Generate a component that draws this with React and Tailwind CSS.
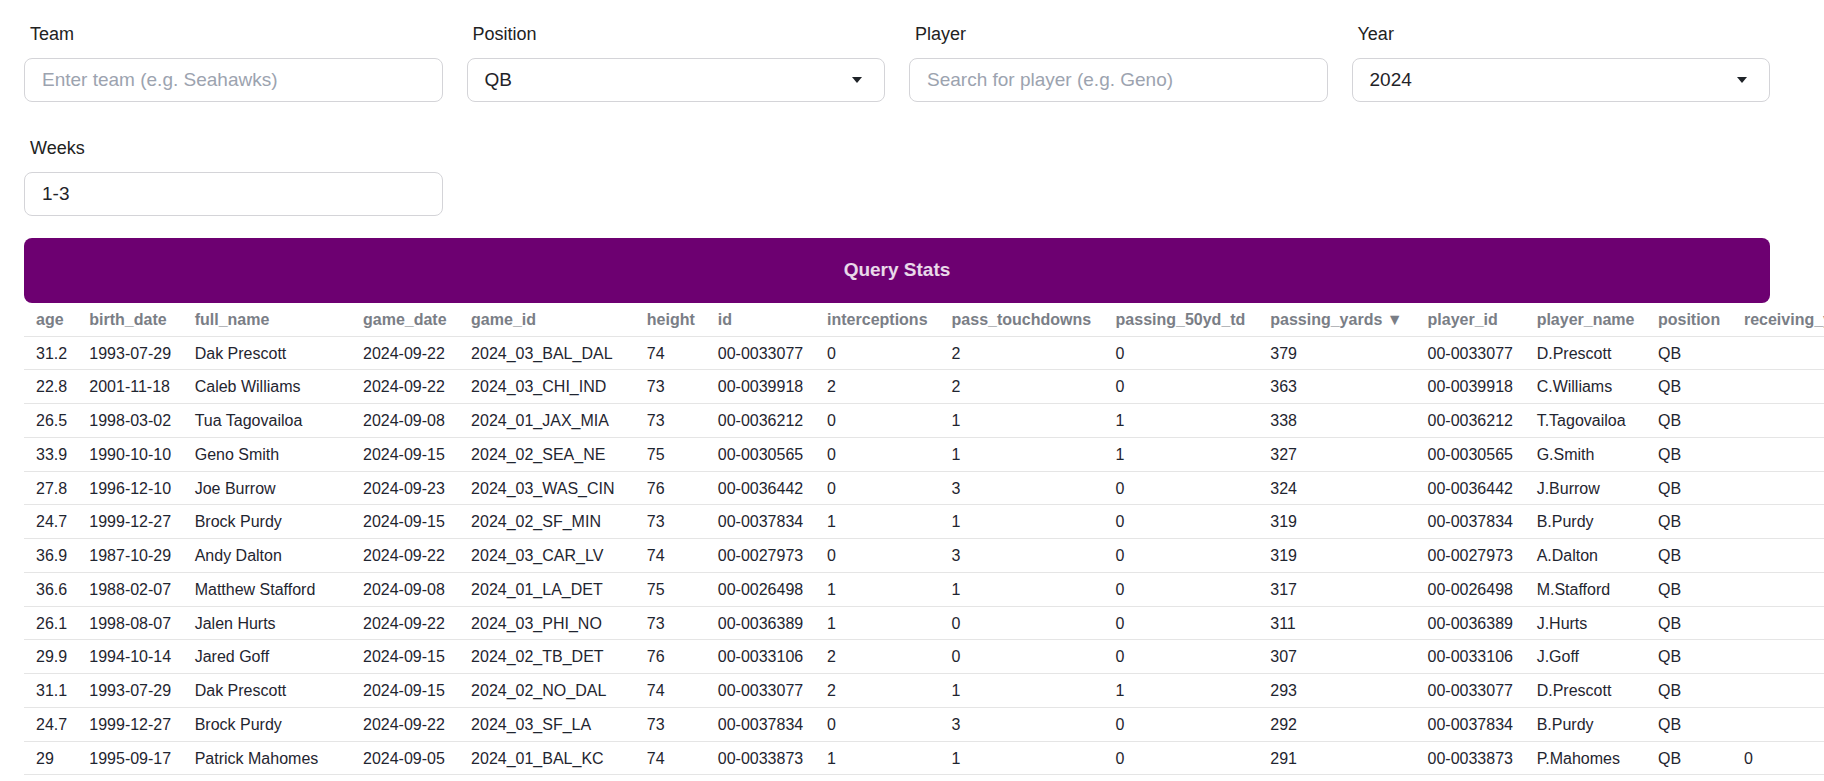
import React from "react";

const cols = [
  { key: "age", w: "w-[53.3px]" },
  { key: "birth_date", w: "w-[105.4px]" },
  { key: "full_name", w: "w-[168.3px]" },
  { key: "game_date", w: "w-[108.1px]" },
  { key: "game_id", w: "w-[175.7px]" },
  { key: "height", w: "w-[71px]" },
  { key: "id", w: "w-[109.3px]" },
  { key: "interceptions", w: "w-[124.5px]" },
  { key: "pass_touchdowns", w: "w-[164px]" },
  { key: "passing_50yd_td", w: "w-[154.7px]" },
  { key: "passing_yards ▼", w: "w-[157.3px]" },
  { key: "player_id", w: "w-[109.1px]" },
  { key: "player_name", w: "w-[121.3px]" },
  { key: "position", w: "w-[86px]" },
  { key: "receiving_yards", w: "w-[150px]" },
  { key: "receiving_touchdowns", w: "w-[190px]" },
  { key: "rushing_yards", w: "w-[130px]" },
  { key: "rushing_touchdowns", w: "w-[180px]" },
];

const rows = [
  ["31.2", "1993-07-29", "Dak Prescott", "2024-09-22", "2024_03_BAL_DAL", "74", "00-0033077", "0", "2", "0", "379", "00-0033077", "D.Prescott", "QB", "", "", "", ""],
  ["22.8", "2001-11-18", "Caleb Williams", "2024-09-22", "2024_03_CHI_IND", "73", "00-0039918", "2", "2", "0", "363", "00-0039918", "C.Williams", "QB", "", "", "", ""],
  ["26.5", "1998-03-02", "Tua Tagovailoa", "2024-09-08", "2024_01_JAX_MIA", "73", "00-0036212", "0", "1", "1", "338", "00-0036212", "T.Tagovailoa", "QB", "", "", "", ""],
  ["33.9", "1990-10-10", "Geno Smith", "2024-09-15", "2024_02_SEA_NE", "75", "00-0030565", "0", "1", "1", "327", "00-0030565", "G.Smith", "QB", "", "", "", ""],
  ["27.8", "1996-12-10", "Joe Burrow", "2024-09-23", "2024_03_WAS_CIN", "76", "00-0036442", "0", "3", "0", "324", "00-0036442", "J.Burrow", "QB", "", "", "", ""],
  ["24.7", "1999-12-27", "Brock Purdy", "2024-09-15", "2024_02_SF_MIN", "73", "00-0037834", "1", "1", "0", "319", "00-0037834", "B.Purdy", "QB", "", "", "", ""],
  ["36.9", "1987-10-29", "Andy Dalton", "2024-09-22", "2024_03_CAR_LV", "74", "00-0027973", "0", "3", "0", "319", "00-0027973", "A.Dalton", "QB", "", "", "", ""],
  ["36.6", "1988-02-07", "Matthew Stafford", "2024-09-08", "2024_01_LA_DET", "75", "00-0026498", "1", "1", "0", "317", "00-0026498", "M.Stafford", "QB", "", "", "", ""],
  ["26.1", "1998-08-07", "Jalen Hurts", "2024-09-22", "2024_03_PHI_NO", "73", "00-0036389", "1", "0", "0", "311", "00-0036389", "J.Hurts", "QB", "", "", "", ""],
  ["29.9", "1994-10-14", "Jared Goff", "2024-09-15", "2024_02_TB_DET", "76", "00-0033106", "2", "0", "0", "307", "00-0033106", "J.Goff", "QB", "", "", "", ""],
  ["31.1", "1993-07-29", "Dak Prescott", "2024-09-15", "2024_02_NO_DAL", "74", "00-0033077", "2", "1", "1", "293", "00-0033077", "D.Prescott", "QB", "", "", "", ""],
  ["24.7", "1999-12-27", "Brock Purdy", "2024-09-22", "2024_03_SF_LA", "73", "00-0037834", "0", "3", "0", "292", "00-0037834", "B.Purdy", "QB", "", "", "", ""],
  ["29", "1995-09-17", "Patrick Mahomes", "2024-09-05", "2024_01_BAL_KC", "74", "00-0033873", "1", "1", "0", "291", "00-0033873", "P.Mahomes", "QB", "0", "", "", ""],
  ["27.1", "1997-08-01", "Justin Herbert", "2024-09-08", "2024_01_LV_LAC", "78", "00-0036355", "0", "1", "0", "144", "00-0036355", "J.Herbert", "QB", "", "", "", ""],
];

function Arrow() {
  return (
    <svg width="10" height="6" viewBox="0 0 10 6" className="shrink-0">
      <path d="M0 0H10L5 6Z" fill="#1f2328" />
    </svg>
  );
}

function Label({ children }) {
  return (
    <div className="pl-[6px] text-[18px] leading-[20px] text-[#222222] mb-[14px]">{children}</div>
  );
}

function TextInput({ placeholder, value }) {
  return (
    <div className="h-[43.5px] w-full border border-[#d4d4d8] rounded-lg px-[17px] flex items-center text-[19px]">
      {value ? (
        <span className="text-[#1f2328]">{value}</span>
      ) : (
        <span className="text-[#9ca3af]">{placeholder}</span>
      )}
    </div>
  );
}

function SelectInput({ value }) {
  return (
    <div className="h-[43.5px] w-full border border-[#d4d4d8] rounded-lg pl-[17px] pr-[22px] flex items-center justify-between text-[19px]">
      <span className="text-[#1f2328]">{value}</span>
      <Arrow />
    </div>
  );
}

export default function App() {
  return (
    <div className="w-[1824px] h-[781px] overflow-hidden bg-white font-['Liberation_Sans',Arial,sans-serif]">
      <div className="w-[1746px] ml-6 pt-6">
        <div className="grid grid-cols-4 gap-x-6 gap-y-[36.5px]">
          <div>
            <Label>Team</Label>
            <TextInput placeholder="Enter team (e.g. Seahawks)" />
          </div>
          <div>
            <Label>Position</Label>
            <SelectInput value="QB" />
          </div>
          <div>
            <Label>Player</Label>
            <TextInput placeholder="Search for player (e.g. Geno)" />
          </div>
          <div>
            <Label>Year</Label>
            <SelectInput value="2024" />
          </div>
          <div>
            <Label>Weeks</Label>
            <TextInput value="1-3" />
          </div>
        </div>
        <button className="mt-[22.5px] h-[65px] w-full rounded-lg bg-[#6d0071] text-[19px] font-bold text-white/85 flex items-center justify-center">
          Query Stats
        </button>
        <table className="table-fixed w-[2358px] border-separate border-spacing-0">
          <thead>
            <tr>
              {cols.map((c) => (
                <th
                  key={c.key}
                  className={`${c.w} text-left font-bold text-[16px] leading-[17.73px] px-3 py-[7.5px] text-[#7a7e86] border-b border-[#e5e5e5] whitespace-nowrap`}
                >
                  {c.key}
                </th>
              ))}
            </tr>
          </thead>
          <tbody>
            {rows.map((r, i) => (
              <tr key={i}>
                {r.map((v, j) => (
                  <td
                    key={j}
                    className="text-[16px] leading-[17.73px] px-3 pt-[8px] pb-[7px] text-[#1f2530] border-b border-[#e5e5e5] whitespace-nowrap"
                  >
                    {v}
                  </td>
                ))}
              </tr>
            ))}
          </tbody>
        </table>
      </div>
    </div>
  );
}
